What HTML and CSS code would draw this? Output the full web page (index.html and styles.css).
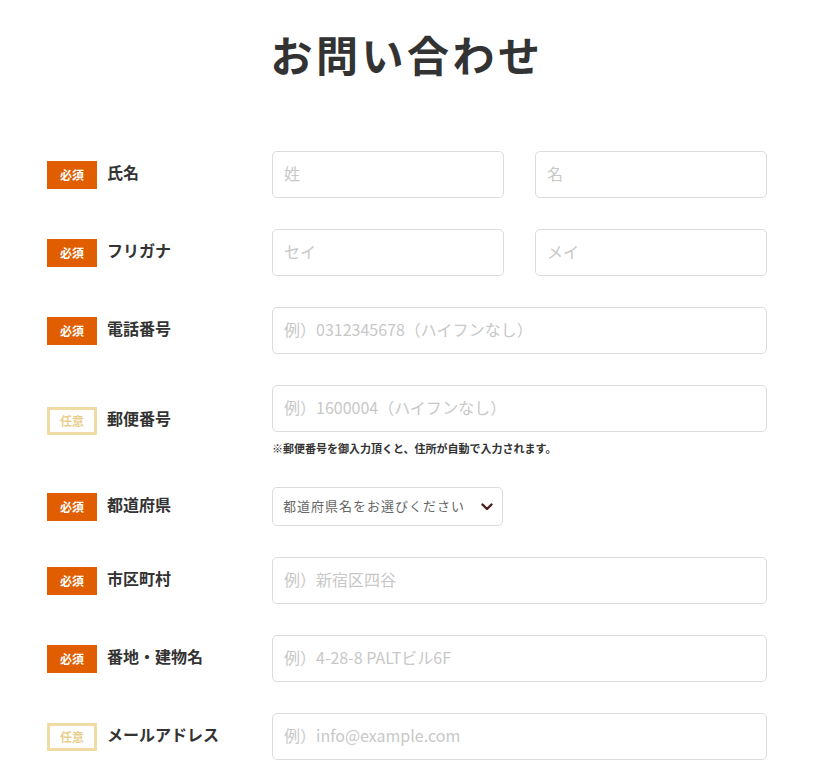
FILE: index.html
```html
<!DOCTYPE html>
<html lang="ja">
<head>
    <meta charset="UTF-8">
    <meta name="viewport" content="width=device-width, initial-scale=1.0">
    <title>お問い合わせ</title>
    <link rel="stylesheet" href="styles.css">
</head>
<body>
    <div class="container">
        <h1 class="page-title">お問い合わせ</h1>

        <form class="contact-form">
            <div class="form-row">
                <div class="form-label"><span class="badge required">必須</span><span class="label-text">氏名</span></div>
                <div class="form-field split">
                    <input type="text" placeholder="姓">
                    <input type="text" placeholder="名">
                </div>
            </div>

            <div class="form-row">
                <div class="form-label"><span class="badge required">必須</span><span class="label-text">フリガナ</span></div>
                <div class="form-field split">
                    <input type="text" placeholder="セイ">
                    <input type="text" placeholder="メイ">
                </div>
            </div>

            <div class="form-row">
                <div class="form-label"><span class="badge required">必須</span><span class="label-text">電話番号</span></div>
                <div class="form-field">
                    <input type="tel" placeholder="例）0312345678（ハイフンなし）">
                </div>
            </div>

            <div class="form-row">
                <div class="form-label"><span class="badge optional">任意</span><span class="label-text">郵便番号</span></div>
                <div class="form-field">
                    <input type="text" placeholder="例）1600004（ハイフンなし）">
                    <p class="note">※郵便番号を御入力頂くと、住所が自動で入力されます。</p>
                </div>
            </div>

            <div class="form-row">
                <div class="form-label"><span class="badge required">必須</span><span class="label-text">都道府県</span></div>
                <div class="form-field">
                    <div class="select-wrap">
                        <select>
                            <option>都道府県名をお選びください</option>
                        </select>
                        <svg class="chevron" width="12" height="8" viewBox="0 0 12 8"><path d="M1.5 1.5 L6 6 L10.5 1.5" fill="none" stroke="#4a1f1c" stroke-width="2.4" stroke-linecap="round" stroke-linejoin="round"/></svg>
                    </div>
                </div>
            </div>

            <div class="form-row">
                <div class="form-label"><span class="badge required">必須</span><span class="label-text">市区町村</span></div>
                <div class="form-field">
                    <input type="text" placeholder="例）新宿区四谷">
                </div>
            </div>

            <div class="form-row">
                <div class="form-label"><span class="badge required">必須</span><span class="label-text">番地・建物名</span></div>
                <div class="form-field">
                    <input type="text" placeholder="例）4-28-8 PALTビル6F">
                </div>
            </div>

            <div class="form-row">
                <div class="form-label"><span class="badge optional">任意</span><span class="label-text">メールアドレス</span></div>
                <div class="form-field">
                    <input type="email" placeholder="例）info@example.com">
                </div>
            </div>
        </form>
    </div>
</body>
</html>
```

FILE: styles.css
```css
body {
    margin: 0;
    background: #fff;
    color: #333;
    font-family: "Noto Sans CJK JP", "Noto Sans", sans-serif;
}

.container {
    width: 720px;
    margin-left: 47px;
    padding-top: 23px;
}

.page-title {
    margin: 0 0 67px;
    text-align: center;
    font-size: 42px;
    font-weight: 700;
    letter-spacing: 3.5px;
    line-height: 61px;
    color: #333;
}

.contact-form {
    display: grid;
    gap: 31px;
}

.form-row {
    display: flex;
    align-items: center;
}

.form-label {
    width: 225px;
    flex-shrink: 0;
    display: flex;
    align-items: center;
    font-size: 16px;
    font-weight: 700;
    color: #333;
}

.label-text {
    padding-bottom: 5px;
}

.badge {
    box-sizing: border-box;
    width: 50px;
    height: 28px;
    margin-right: 10px;
    display: flex;
    align-items: center;
    justify-content: center;
    font-size: 12px;
    font-weight: 700;
}

.required {
    background: #e05e00;
    color: #fff;
}

.optional {
    border: 3px solid #f0dba5;
    color: #e9cf8e;
    background: #fff;
}

.form-field {
    flex: 1;
}

.form-field.split {
    display: flex;
    gap: 31px;
}

input {
    box-sizing: border-box;
    width: 100%;
    height: 47px;
    padding: 0 11px 4px;
    border: 1px solid #dcdcdc;
    border-radius: 5px;
    font-size: 16px;
    font-family: "Noto Sans CJK JP", "Noto Sans", sans-serif;
    color: #333;
    outline: none;
}

input::placeholder {
    color: #c8c8c8;
}

.note {
    margin: 8px 0 0;
    font-size: 11px;
    font-weight: 700;
    line-height: 16px;
    color: #333;
}

.select-wrap {
    position: relative;
    width: 231px;
}

select {
    box-sizing: border-box;
    width: 100%;
    height: 39px;
    padding: 0 32px 2px 10px;
    border: 1px solid #dcdcdc;
    border-radius: 5px;
    background: #fff;
    font-size: 13px;
    font-family: "Noto Sans CJK JP", "Noto Sans", sans-serif;
    color: #666;
    letter-spacing: 1px;
    appearance: none;
    -webkit-appearance: none;
}

.chevron {
    position: absolute;
    right: 10px;
    top: 16px;
    pointer-events: none;
}
```
